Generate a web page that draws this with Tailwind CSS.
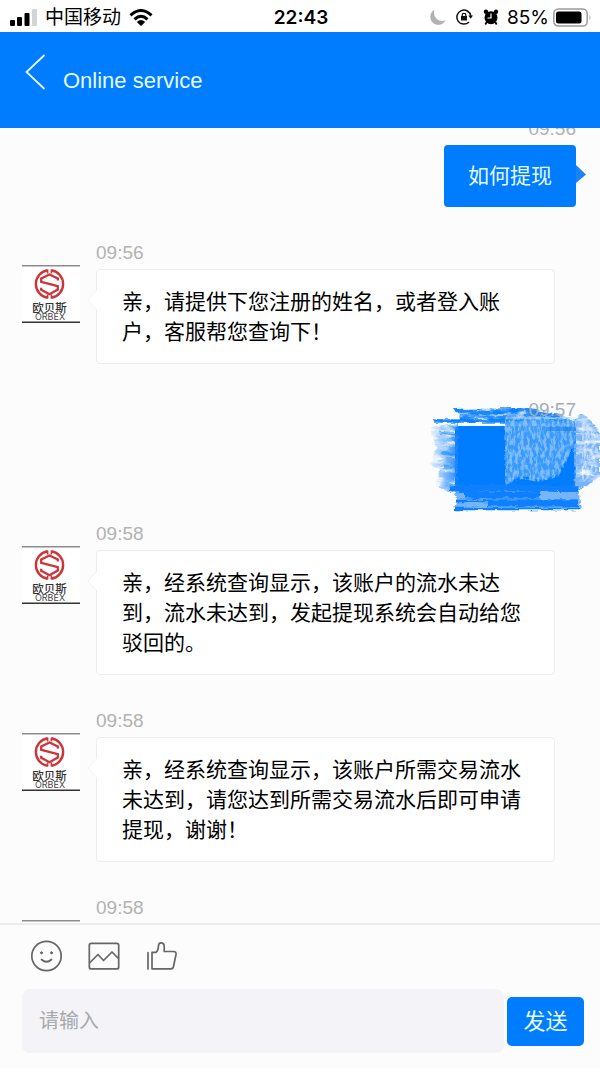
<!DOCTYPE html>
<html lang="zh-CN">
<head>
<meta charset="utf-8">
<meta name="viewport" content="width=device-width, initial-scale=1">
<title>Online service</title>
<script src="https://cdn.jsdelivr.net/npm/@tailwindcss/browser@4"></script>
</head>
<body class="flex h-screen flex-col overflow-hidden bg-[#fcfcfc] font-['Liberation_Sans','Noto_Sans_CJK_SC',sans-serif] text-black">

<!-- Shared symbols -->
<svg class="hidden" aria-hidden="true">
  <symbol id="brand" viewBox="0 0 58 58">
    <rect width="58" height="58" fill="#fff"/>
    <path d="M0 .8H58" stroke="#8c8c8c" stroke-width="1.5"/>
    <path d="M0 57.2H58" stroke="#333" stroke-width="1.6"/>
    <g fill="none" stroke="#cf3338">
      <path d="M25.500 5.200A14 14 0 0 0 25.500 32.800M29.500 32.800A14 14 0 0 0 29.500 5.200" stroke-width="2.400"/>
      <path d="M25.600 4.500V8.500M29.400 4.500V8.500M25.600 33.500V29.500M29.400 33.500V29.500" stroke-width="1.600"/>
      <path d="M35.800 15.500V13.500L27.500 9.500 19.200 13.500V16.800L35.800 21.200V24.500L27.500 29.200 19.200 24.800V22.800" stroke-width="2.300"/>
    </g>
    <text x="27.500" y="47" text-anchor="middle" font-family="'Noto Sans CJK SC',sans-serif" font-size="11.500" font-weight="500" fill="#333">欧贝斯</text>
    <text x="28" y="55" text-anchor="middle" font-family="'Inter',sans-serif" font-size="9" fill="#444">ORBEX</text>
  </symbol>
</svg>

<!-- Status bar -->
<div class="grid h-8 shrink-0 grid-cols-[1fr_auto_1fr] items-center bg-white pr-2 pl-2.5">
  <div class="flex items-center gap-2">
    <svg class="h-[17px] w-[27px]" viewBox="0 0 27 17" aria-hidden="true">
      <rect x="0" y="11" width="5" height="6" rx="1"/><rect x="7" y="8" width="5" height="9" rx="1"/><rect x="14.500" y="4" width="5" height="13" rx="1"/><rect x="22" y="0" width="5" height="17" rx="1" fill="#d4d4d4"/>
    </svg>
    <span class="pt-0.5 text-[19px] leading-8">中国移动</span>
    <svg class="h-[17px] w-6" viewBox="0 0 24 17" fill="none" stroke="#000" stroke-width="3" aria-hidden="true">
      <path d="M1.500 6.300Q12-3.200 22.500 6.300M5.500 10.300Q12 4.300 18.500 10.300"/>
      <path d="M12 17L7.800 12.900Q12 9.300 16.200 12.900Z" fill="#000" stroke="none"/>
    </svg>
  </div>
  <time class="pt-0.5 font-['Inter',sans-serif] text-[19px] font-semibold">22:43</time>
  <div class="flex items-center justify-end">
    <svg class="mr-2.5 size-4" viewBox="0 0 16 16" fill="#b2b2b2" aria-hidden="true"><path d="M4.500.8A8 8 0 1 0 15.500 11.300 8.300 8.300 0 0 1 4.500.800Z"/></svg>
    <svg class="mr-2.5 h-4 w-[17px]" viewBox="0 0 17 16" fill="none" stroke="#111" aria-hidden="true">
      <path d="M14.800 7A7 7 0 1 0 13 12.900" stroke-width="1.500"/><path d="M12.300 6.600H17L14.700 9.800Z" fill="#111" stroke="none"/>
      <rect x="5" y="7" width="6" height="4.500" fill="#111" stroke="none"/><path d="M6.200 7.500V6Q6.200 4.300 8 4.300T9.800 6V7.500" stroke-width="1.200"/>
    </svg>
    <svg class="mr-2 size-4" viewBox="0 0 16 16" aria-hidden="true">
      <circle cx="8" cy="8.700" r="6.500"/><circle cx="3" cy="2.800" r="2.200"/><circle cx="13" cy="2.800" r="2.200"/><path d="M3.800 13L2.300 15.500M12.200 13L13.700 15.500" stroke="#000" stroke-width="1.800"/><path d="M8 4.500V9H4.500" fill="none" stroke="#fff" stroke-width="1.200"/>
    </svg>
    <span class="mr-1 pt-0.5 font-['Inter',sans-serif] text-[19px]">85%</span>
    <svg class="h-[19px] w-[39px]" viewBox="0 0 39 19" aria-hidden="true">
      <rect x=".8" y="1" width="33.400" height="17" rx="4.500" fill="none" stroke="#9a9a9a" stroke-width="1.500"/><rect x="3" y="3.500" width="25.500" height="12" rx="2.500"/><path d="M36.500 7Q38.500 9.500 36.500 12Z" fill="#999"/>
    </svg>
  </div>
</div>

<!-- Title bar -->
<header class="flex h-24 shrink-0 items-center gap-4 bg-[#007cff] px-6 text-[#e4fbff]">
  <button type="button" aria-label="返回" class="-mt-4 h-9 w-[23px]">
    <svg class="h-9 w-[23px]" viewBox="0 0 23 36" fill="none" stroke="currentColor" stroke-width="1.800"><path d="M20.500 1L2.500 18 20.500 35"/></svg>
  </button>
  <h1 class="pt-0.5 text-[22px] leading-8">Online service</h1>
</header>

<!-- Conversation -->
<main class="min-h-0 flex-1 overflow-hidden">
  <div class="-mt-[15px] flex flex-col gap-[30px]">

    <article class="flex flex-col items-end pr-6">
      <time class="h-8 text-[19px] leading-8 text-[#b2b2b2]">09:56</time>
      <div class="relative flex h-[62px] items-center rounded bg-[#007cff] px-6 text-[21px] text-[#e4fbff]">
        <p>如何提现</p>
        <svg class="absolute top-5 left-full h-5 w-2.5" viewBox="0 0 10 20" fill="#1c83f5" aria-hidden="true"><path d="M0 0L10 9.500 0 18Z"/></svg>
      </div>
    </article>

    <article class="flex gap-4 pr-[45px] pl-[22px]">
      <svg class="mt-7 size-[58px] shrink-0" role="img" aria-label="欧贝斯 ORBEX"><use href="#brand"/></svg>
      <div class="min-w-0 flex-1">
        <time class="block h-8 text-[19px] leading-8 text-[#b2b2b2]">09:56</time>
        <div class="relative rounded border border-[#ededed] bg-white px-[25px] pt-[17px] pb-4 text-[21px] leading-[30px]">
          <p>亲，请提供下您注册的姓名，或者登入账户，客服帮您查询下！</p>
          <svg class="absolute top-5 right-full h-5 w-2.5" viewBox="0 0 10 20" aria-hidden="true"><path d="M10 0L1 10 10 20" fill="#fff" stroke="#f2f2f2"/></svg>
        </div>
      </div>
    </article>

    <article class="flex flex-col items-end pr-6">
      <time class="relative z-10 h-8 text-[19px] leading-8 text-[#a3adb8]">09:57</time>
      <div class="relative h-[62px] w-[121px] rounded bg-[#007cff]">
        <!-- Crayon scribble covering the message -->
        <svg class="absolute -top-[37px] -left-[45px] h-[135px] w-[190px]" viewBox="0 0 190 135" role="img" aria-label="已涂抹的消息">
          <defs>
            <filter id="rough" x="-10%" y="-20%" width="120%" height="140%">
              <feTurbulence type="fractalNoise" baseFrequency=".1 .3" numOctaves="3" seed="4" result="n"/>
              <feDisplacementMap in="SourceGraphic" in2="n" scale="5" xChannelSelector="R" yChannelSelector="G"/>
              <feGaussianBlur stdDeviation=".6"/>
            </filter>
            <filter id="grain" x="-5%" y="-5%" width="110%" height="110%">
              <feTurbulence type="fractalNoise" baseFrequency=".06 .18" numOctaves="4" seed="8" result="n"/>
              <feColorMatrix in="n" values="0 0 0 0 0  0 0 0 0 0  0 0 0 0 0  2.500 0 0 0 -.450" result="m"/>
              <feComposite in="SourceGraphic" in2="m" operator="in" result="g"/>
              <feDisplacementMap in="g" in2="n" scale="6" xChannelSelector="R" yChannelSelector="G"/>
              <feGaussianBlur stdDeviation=".7"/>
            </filter>
            <filter id="chalk" x="0" y="0" width="100%" height="100%">
              <feTurbulence type="fractalNoise" baseFrequency=".35 .16" numOctaves="3" seed="12" result="n"/>
              <feColorMatrix in="n" values="0 0 0 0 0  0 0 0 0 0  0 0 0 0 0  4 0 0 0 -1.600" result="m"/>
              <feComposite in="SourceGraphic" in2="m" operator="in"/>
              <feGaussianBlur stdDeviation=".5"/>
            </filter>
            <linearGradient id="fade"><stop offset="0" stop-color="#2b90ff" stop-opacity=".1"/><stop offset="1" stop-color="#2388fb" stop-opacity=".95"/></linearGradient>
          </defs>
          <g filter="url(#grain)">
            <path d="M20 40L48 33V100L38 103 24 96 30 84 20 73 27 60Z" fill="url(#fade)"/>
            <path d="M44 20L112 19 126 21 151 25 160 33H24L23 30 52 31Z" fill="#2389fa"/>
            <path d="M163 33L172 24 190 42V86L178 96 165 102Z" fill="#77b3fb"/>
          </g>
          <path d="M39 96H169V105L171 121H44L47 108Z" fill="#3f98fb" opacity=".7" filter="url(#rough)"/>
          <g filter="url(#rough)" fill="none" stroke="#077fff">
            <path d="M24 32H160M46 22Q80 25 108 21" stroke-width="3.500" opacity=".8"/>
            <path d="M44 120H170M46 112H168" stroke-width="2.500"/>
            <path d="M40 100Q100 97 168 100M54 106H130M78 114H168" stroke-width="7"/>
            <path d="M29 43L70 47M32 64L49 67M34 78L48 79" stroke-width="3" opacity=".45"/>
          </g>
          <g filter="url(#rough)">
            <path d="M95 32H165V55L157 70 148 86 131 91 112 87 95 96Z" fill="#3f9bfb" opacity=".9"/>
          </g>
          <path d="M95 28H165V47L158 70 148 88 129 93 112 90 95 96Z" fill="#a2d2fc" filter="url(#chalk)" opacity=".65"/>
          <path d="M136 40H166" fill="none" stroke="#157fec" stroke-width="4" opacity=".6"/>
          <path d="M172 30L188 45V82L172 94Z" fill="#fff" opacity=".5" filter="url(#chalk)"/>
        </svg>
      </div>
    </article>

    <article class="flex gap-4 pr-[45px] pl-[22px]">
      <svg class="mt-7 size-[58px] shrink-0" role="img" aria-label="欧贝斯 ORBEX"><use href="#brand"/></svg>
      <div class="min-w-0 flex-1">
        <time class="block h-8 text-[19px] leading-8 text-[#b2b2b2]">09:58</time>
        <div class="relative rounded border border-[#ededed] bg-white px-[25px] pt-[17px] pb-4 text-[21px] leading-[30px]">
          <p>亲，经系统查询显示，该账户的流水未达到，流水未达到，发起提现系统会自动给您驳回的。</p>
          <svg class="absolute top-5 right-full h-5 w-2.5" viewBox="0 0 10 20" aria-hidden="true"><path d="M10 0L1 10 10 20" fill="#fff" stroke="#f2f2f2"/></svg>
        </div>
      </div>
    </article>

    <article class="flex gap-4 pr-[45px] pl-[22px]">
      <svg class="mt-7 size-[58px] shrink-0" role="img" aria-label="欧贝斯 ORBEX"><use href="#brand"/></svg>
      <div class="min-w-0 flex-1">
        <time class="block h-8 text-[19px] leading-8 text-[#b2b2b2]">09:58</time>
        <div class="relative rounded border border-[#ededed] bg-white px-[25px] pt-[17px] pb-4 text-[21px] leading-[30px]">
          <p>亲，经系统查询显示，该账户所需交易流水未达到，请您达到所需交易流水后即可申请提现，谢谢！</p>
          <svg class="absolute top-5 right-full h-5 w-2.5" viewBox="0 0 10 20" aria-hidden="true"><path d="M10 0L1 10 10 20" fill="#fff" stroke="#f2f2f2"/></svg>
        </div>
      </div>
    </article>

    <article class="flex gap-4 pr-[45px] pl-[22px]">
      <svg class="mt-7 size-[58px] shrink-0" role="img" aria-label="欧贝斯 ORBEX"><use href="#brand"/></svg>
      <time class="block h-8 text-[19px] leading-8 text-[#b2b2b2]">09:58</time>
    </article>
  </div>
</main>

<!-- Composer -->
<footer class="shrink-0 border-t-2 border-[#ededed] bg-[#fcfcfc] pb-[15px]">
  <div class="flex gap-[26px] px-[30px] pt-[15px] text-[#666]">
    <button type="button" aria-label="表情" class="size-8"><svg class="size-8" viewBox="0 0 32 32" fill="none" stroke="currentColor" stroke-width="1.700" stroke-linecap="round"><circle cx="16.500" cy="16" r="14.700"/><path d="M11.500 19.500Q16.500 24 21.500 19.500"/><circle cx="11.500" cy="12.800" r="1" fill="currentColor" stroke-width="1"/><circle cx="21.500" cy="12.800" r="1" fill="currentColor" stroke-width="1"/></svg></button>
    <button type="button" aria-label="图片" class="size-8"><svg class="size-8" viewBox="0 0 32 32" fill="none" stroke="currentColor" stroke-width="1.700" stroke-linejoin="round"><rect x="1.300" y="3.300" width="29.400" height="25.600" rx="2"/><path d="M1.500 23L10 14.500 15.500 20.500 24 12 30.500 18.500"/></svg></button>
    <button type="button" aria-label="点赞" class="size-8"><svg class="size-8" viewBox="0 0 32 32" fill="none" stroke="currentColor" stroke-width="1.700" stroke-linejoin="round" stroke-linecap="round"><path d="M2 12.500V29M6 28.800V12.300H10Q12.300 10.500 12.500 5.500 12.700 2.800 15 2.800 18.200 2.800 18.200 6.500V11.500H27.500Q30.500 11.500 30 14.500L27.500 26.500Q27 28.800 25 28.800Z"/></svg></button>
  </div>
  <form class="flex items-center gap-[3px] pt-[17px] pr-4 pl-[22px]" onsubmit="return false">
    <input type="text" aria-label="消息" placeholder="请输入" class="h-16 min-w-0 flex-1 rounded-lg bg-[#f3f3f8] px-[17px] text-[20px] placeholder:text-[#a9a9ad]">
    <button type="submit" class="h-[49px] w-[77px] rounded-[5px] bg-[#007cff] text-[22px] text-[#e4fbff]">发送</button>
  </form>
</footer>
</body>
</html>
